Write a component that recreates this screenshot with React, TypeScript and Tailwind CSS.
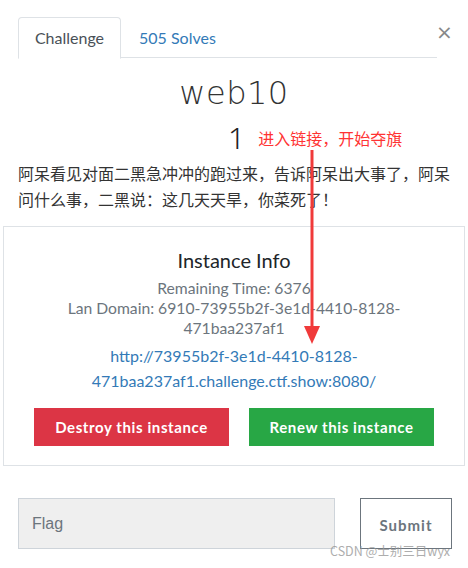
import React from "react";

export default function App() {
  return (
    <div className="relative w-[468px] h-[568px] bg-white overflow-hidden text-[#212529]" style={{ fontFamily: "Lato, 'Noto Sans CJK SC', sans-serif" }}>
      {/* tabs */}
      <div className="flex items-start pt-[17px] pl-[18px]">
        <div className="flex w-[419px] h-[41px] border-b border-[#dee2e6]">
          <div className="w-[103px] h-[42px] border border-[#dee2e6] border-b-white rounded-t-[4px] bg-white flex items-center justify-center text-[16px] text-[#495057]">
            Challenge
          </div>
          <div className="h-[41px] pl-[18px] flex items-center text-[16px] text-[#337ab7]">505 Solves</div>
        </div>
        <div className="ml-[-1px] mt-[4px] text-[#888] text-[20px] leading-[22px]" style={{ fontFamily: "'DejaVu Sans', sans-serif" }}>
          ×
        </div>
      </div>

      {/* title */}
      <div className="h-[57px] pt-[12px] flex items-center justify-center text-[32px] tracking-[0.5px] text-[#333]" style={{ fontFamily: "'DejaVu Sans', sans-serif", fontWeight: 200 }}>
        web10
      </div>

      {/* annotation row */}
      <div className="h-[45px] flex items-center pl-[228px]">
        <span className="text-[30px] leading-[30px] text-[#222]" style={{ fontFamily: "'Noto Sans', sans-serif", fontWeight: 300 }}>1</span>
        <span className="ml-[13px] text-[16px] text-[#ff3333]" style={{ fontFamily: "'Noto Sans CJK SC', sans-serif" }}>进入链接，开始夺旗</span>
      </div>

      {/* description */}
      <p className="px-[18px] text-[16px] leading-[26px] text-[#333]" style={{ fontFamily: "'Noto Sans CJK SC', sans-serif" }}>
        阿呆看见对面二黑急冲冲的跑过来，告诉阿呆出大事了，阿呆问什么事，二黑说：这几天天旱，你菜死了！
      </p>

      {/* instance box */}
      <div className="mx-[3px] mt-[14px] h-[240px] border border-[#dee2e6] px-[20px] pt-[19px] flex flex-col items-center text-center">
        <div className="text-[20px] leading-[28px] text-[#212529]">Instance Info</div>
        <div className="mt-[4px] text-[15.7px] leading-[20px] text-[#6c757d]">
          <div>Remaining Time: 6376</div>
          <div className="w-[360px] mx-auto">Lan Domain: 6910-73955b2f-3e1d-4410-8128-471baa237af1</div>
        </div>
        <div className="mt-[5px] w-[320px] text-[16px] leading-[25px] text-[#337ab7]">
          http://73955b2f-3e1d-4410-8128-471baa237af1.challenge.ctf.show:8080/
        </div>
        <div className="mt-[15px] flex gap-[20px]">
          <button className="w-[195px] h-[38px] bg-[#dc3545] text-white font-bold text-[15px] tracking-[0.6px]">Destroy this instance</button>
          <button className="w-[185px] h-[38px] bg-[#28a745] text-white font-bold text-[15px] tracking-[0.6px]">Renew this instance</button>
        </div>
      </div>

      {/* flag form */}
      <div className="mt-[32px] flex pl-[18px] gap-[25px]">
        <div className="w-[317px] h-[51px] bg-[#efefef] border border-[#ced4da] flex items-center pl-[13px] text-[16px] text-[#6c757d]" style={{ fontFamily: "'Liberation Sans', Arial, sans-serif" }}>
          Flag
        </div>
        <button className="w-[92px] h-[51px] pt-[3px] border border-[#6c757d] text-[#6c757d] font-bold text-[15px] tracking-[1px]">Submit</button>
      </div>

      {/* red arrow annotation */}
      <svg className="absolute left-[302px] top-[150px]" width="20" height="195" viewBox="0 0 20 195">
        <line x1="10" y1="0" x2="10" y2="180" stroke="#f03a3a" strokeWidth="3" />
        <polygon points="2,176 18,176 10,194" fill="#f03a3a" />
      </svg>

      {/* watermark */}
      <div className="absolute left-[330px] top-[542px] text-[12.5px] leading-[18px] text-[#999] opacity-80" style={{ fontFamily: "'Noto Sans CJK SC', sans-serif" }}>
        CSDN @士别三日wyx
      </div>
    </div>
  );
}
